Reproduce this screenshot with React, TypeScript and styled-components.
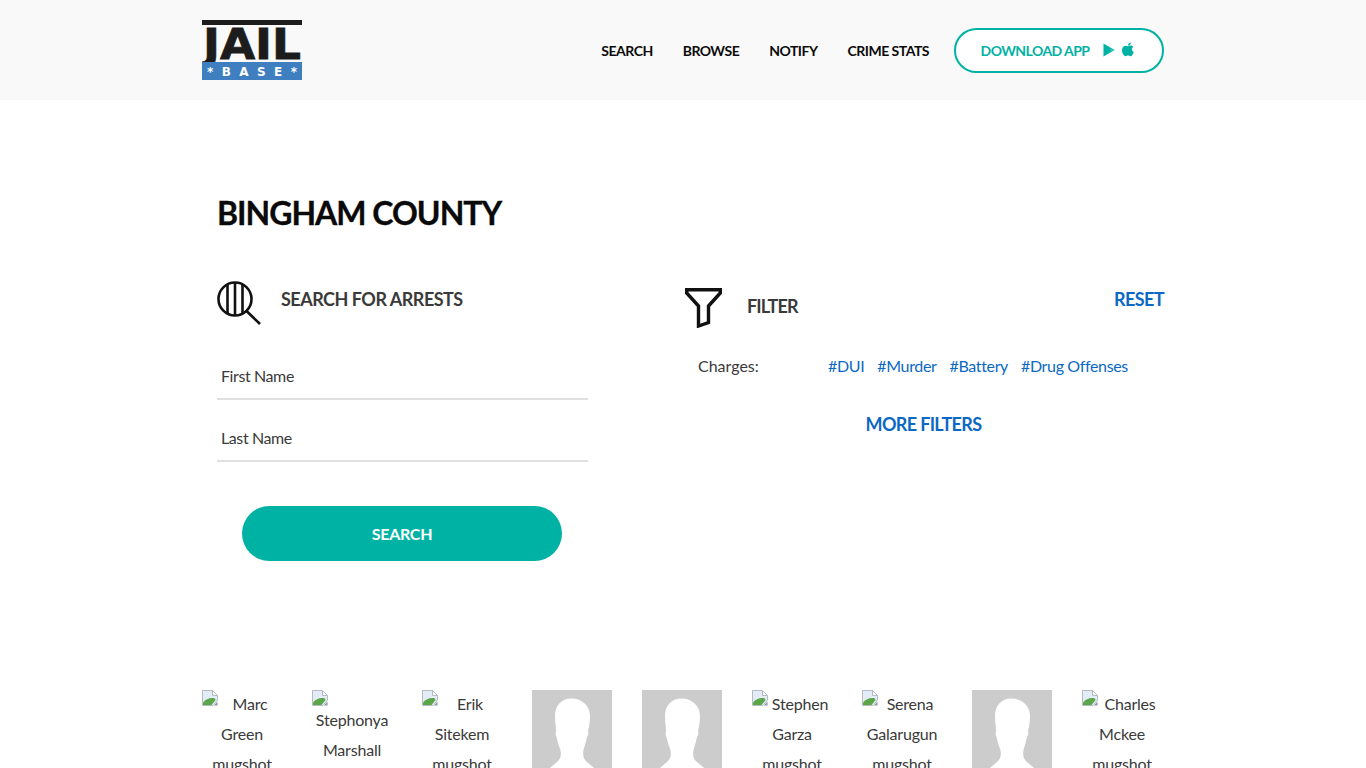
import React, { FC } from 'react';
import styled, { createGlobalStyle } from 'styled-components';

const GlobalStyle = createGlobalStyle`
  html, body {
    margin: 0;
    padding: 0;
    background: #fff;
    font-family: 'Lato', 'Liberation Sans', sans-serif;
    color: #3a3a3a;
  }
  * { box-sizing: border-box; }
`;

const teal = '#00b2a3';
const blue = '#0b68c4';

type TMugshot = { name?: string };

const mugshots: TMugshot[] = [
  { name: 'Marc Green' },
  { name: 'Stephonya Marshall' },
  { name: 'Erik Sitekem' },
  {},
  {},
  { name: 'Stephen Garza' },
  { name: 'Serena Galarugun' },
  {},
  { name: 'Charles Mckee' }
];

const tags = ['#DUI', '#Murder', '#Battery', '#Drug Offenses'];

const BrokenImage: FC = () => (
  <BrokenIcon viewBox='0 0 16 16'>
    <path d='M0.5 0.5H10.5L15.5 5.5V10L11 15.5H0.5Z' fill='#e4ecf7' stroke='#b4bbc3' />
    <path d='M10.5 0.5V5.5H15.5Z' fill='#fff' stroke='#b4bbc3' />
    <path d='M1 15V12.5C4 9 7 7.5 12 8C13 8.5 13.5 9.5 13.5 10L9.5 15Z' fill='#5aa648' />
    <path d='M12 15.5L15.5 11.5V15.5Z' fill='#8a96a1' />
  </BrokenIcon>
);

const Silhouette: FC = () => (
  <SilhouetteSvg viewBox='0 0 80 100'>
    <rect width='80' height='100' fill='#cccccc' />
    <path
      d='M39.5 8.5C29 8.5 23 16 23 26C23 32 24 37 24 41C23.5 43 23.5 45 24.5 47C25.5 52 27 56 28.5 60C29.5 65 28.5 69 25 72C22 75 18 77 15 81L11 100H69L65 81C62 77 58 75 55 72C51.5 69 50.5 65 51.5 60C52.5 56 54 52 55 47C56.5 45 56.5 43 56 41C57 37 58 32 58 26C58 16 50 8.5 39.5 8.5Z'
      fill='#ffffff'
    />
  </SilhouetteSvg>
);

const App: FC = () => (<>
  <GlobalStyle />
  <Header>
    <HeaderInner>
      <Logo viewBox='0 0 100 60' aria-label='JailBase'>
        <rect width='100' height='5' fill='#1c1c1c' />
        <LogoJail x='50' y='39' textLength='98' lengthAdjust='spacingAndGlyphs'>JAIL</LogoJail>
        <rect y='42' width='100' height='18' fill='#3f7fbf' />
        <LogoBase x='50' y='55.5' textLength='90' lengthAdjust='spacing'>*BASE*</LogoBase>
      </Logo>
      <Nav>
        <NavLink>Search</NavLink>
        <NavLink>Browse</NavLink>
        <NavLink>Notify</NavLink>
        <NavLink>Crime Stats</NavLink>
        <DownloadButton>
          Download App
          <DownloadIcons>
            <svg width='12' height='14' viewBox='0 0 12 14'>
              <path d='M0.5 0.5L11.5 7L0.5 13.5Z' fill={teal} />
              <path d='M6.5 7L8.6 5.3L11.5 7L8.6 8.7Z' fill='#2fc4b7' />
            </svg>
            <svg width='14' height='16' viewBox='0 0 14 16'>
              <path d='M7 4.2C8 3.4 9.3 3.2 10.4 3.6C11.2 3.9 11.8 4.4 12.2 5C10.2 6.2 10.6 9 12.8 9.9C12.2 11.8 10.8 14.2 9.4 14.2C8.4 14.2 8 13.6 7 13.6C6 13.6 5.5 14.2 4.6 14.2C3 14.2 1 11 1 8.2C1 5.4 2.8 3.7 4.6 3.7C5.6 3.7 6.3 4.2 7 4.2Z' fill={teal} />
              <path d='M7 3.6C7 2 8.2 0.6 9.8 0.4C9.9 2 8.6 3.6 7 3.6Z' fill={teal} />
            </svg>
          </DownloadIcons>
        </DownloadButton>
      </Nav>
    </HeaderInner>
  </Header>
  <Main>
    <Title>Bingham County</Title>
    <Columns>
      <SearchColumn>
        <SearchHeading>
          <svg width='44' height='44' viewBox='0 0 44 44' fill='none' stroke='#111' strokeWidth='2.6'>
            <circle cx='18' cy='18' r='16.5' />
            <path d='M10.5 3.5V32.5M18 1.5V34.5M25.5 3.5V32.5' />
            <path d='M29.5 30L43 43' />
          </svg>
          <SectionLabel>Search for arrests</SectionLabel>
        </SearchHeading>
        <Field>First Name</Field>
        <Field>Last Name</Field>
        <SearchButton>Search</SearchButton>
      </SearchColumn>
      <FilterColumn>
        <FilterHeading>
          <svg width='37' height='40' viewBox='0 0 37 40' fill='none' stroke='#111' strokeWidth='3.4'>
            <path d='M1.7 1.7H35.3V5L23.5 18V34.5L13.5 38V18L1.7 5Z' />
          </svg>
          <FilterLabel>Filter</FilterLabel>
          <ResetLink>Reset</ResetLink>
        </FilterHeading>
        <ChargeRow>
          <ChargeLabel>Charges:</ChargeLabel>
          {tags.map((tag) => <Tag key={tag}>{tag}</Tag>)}
        </ChargeRow>
        <MoreFilters>More filters</MoreFilters>
      </FilterColumn>
    </Columns>
    <MugshotRow>
      {mugshots.map((mugshot, index) => mugshot.name
        ? <MugshotCaption key={index}><BrokenImage />{mugshot.name} mugshot</MugshotCaption>
        : <MugshotPhoto key={index}><Silhouette /></MugshotPhoto>
      )}
    </MugshotRow>
  </Main>
</>);

export default App;

const Header = styled.header`
  height: 100px;
  background: #f9f9f9;
`;

const HeaderInner = styled.div`
  width: 962px;
  height: 100%;
  margin: 0 auto;
  display: flex;
  align-items: center;
  justify-content: space-between;
`;

const Logo = styled.svg`
  width: 100px;
  height: 60px;
  display: block;
`;

const LogoJail = styled.text`
  font-family: 'DejaVu Sans', sans-serif;
  font-weight: 700;
  font-size: 43px;
  text-anchor: middle;
  fill: #1c1c1c;
  stroke: #1c1c1c;
  stroke-width: 0.8px;
`;

const LogoBase = styled.text`
  font-family: 'DejaVu Sans', sans-serif;
  font-weight: 700;
  font-size: 12px;
  text-anchor: middle;
  fill: #ffffff;
`;

const Nav = styled.nav`
  display: flex;
  align-items: center;
`;

const NavLink = styled.a`
  margin-right: 30px;
  font-size: 14px;
  font-weight: 700;
  letter-spacing: -0.5px;
  text-transform: uppercase;
  color: #0a0a0a;
  &:nth-child(4) {
    margin-right: 25px;
  }
`;

const DownloadButton = styled.a`
  width: 210px;
  height: 45px;
  display: flex;
  align-items: center;
  justify-content: center;
  gap: 14px;
  padding-right: 2px;
  border: 2px solid ${teal};
  border-radius: 23px;
  background: #fff;
  font-size: 14px;
  font-weight: 700;
  letter-spacing: -0.55px;
  text-transform: uppercase;
  color: ${teal};
`;

const DownloadIcons = styled.span`
  display: flex;
  align-items: center;
  gap: 6px;
`;

const Main = styled.main`
  width: 962px;
  margin: 0 auto;
`;

const Title = styled.h1`
  margin: 0;
  padding: 93px 0 0 15px;
  font-size: 32px;
  line-height: 40px;
  font-weight: 700;
  letter-spacing: -1px;
  -webkit-text-stroke: 0.3px #0a0a0a;
  text-transform: uppercase;
  color: #0a0a0a;
`;

const Columns = styled.div`
  display: flex;
  padding: 48px 0 0 15px;
  height: 457px;
`;

const SearchColumn = styled.section`
  width: 371px;
  display: flex;
  flex-direction: column;
`;

const SearchHeading = styled.div`
  display: flex;
  align-items: flex-start;
  gap: 20px;
  height: 60px;
`;

const SectionLabel = styled.h2`
  margin: 0;
  padding-top: 8px;
  font-size: 18px;
  line-height: 20px;
  font-weight: 700;
  letter-spacing: -0.5px;
  text-transform: uppercase;
  color: #3a3a3a;
`;

const Field = styled.div`
  height: 59px;
  margin-bottom: 3px;
  padding: 25px 0 0 4px;
  border-bottom: 2px solid #e0e0e0;
  font-size: 16px;
  line-height: 20px;
  letter-spacing: -0.4px;
  color: #3a3a3a;
`;

const SearchButton = styled.button`
  width: 320px;
  height: 55px;
  margin: 41px 0 0 25px;
  border: 0;
  border-radius: 28px;
  background: ${teal};
  color: #fff;
  font-family: inherit;
  font-size: 16px;
  font-weight: 700;
  letter-spacing: -0.3px;
  text-transform: uppercase;
`;

const FilterColumn = styled.section`
  width: 479px;
  margin-left: 97px;
  padding-top: 7px;
`;

const FilterHeading = styled.div`
  display: flex;
  align-items: flex-start;
  height: 40px;
`;

const FilterLabel = styled.h2`
  margin: 0;
  padding: 8px 0 0 25px;
  flex-grow: 1;
  font-size: 18px;
  line-height: 20px;
  font-weight: 700;
  letter-spacing: -0.9px;
  text-transform: uppercase;
  color: #3a3a3a;
`;

const ResetLink = styled.a`
  margin-top: -7px;
  padding-top: 8px;
  font-size: 18px;
  line-height: 20px;
  font-weight: 700;
  letter-spacing: -0.6px;
  text-transform: uppercase;
  color: ${blue};
`;

const ChargeRow = styled.div`
  display: flex;
  align-items: center;
  margin-top: 28px;
  padding-left: 13px;
  font-size: 16px;
  line-height: 20px;
  letter-spacing: -0.35px;
`;

const ChargeLabel = styled.span`
  width: 130px;
  letter-spacing: 0;
  color: #3a3a3a;
`;

const Tag = styled.a`
  margin-right: 13px;
  color: ${blue};
`;

const MoreFilters = styled.a`
  display: block;
  margin-top: 38px;
  padding-right: 2px;
  text-align: center;
  font-size: 18px;
  line-height: 20px;
  font-weight: 700;
  letter-spacing: -0.65px;
  text-transform: uppercase;
  color: ${blue};
`;

const MugshotRow = styled.div`
  display: flex;
  align-items: flex-start;
  gap: 30px;
`;

const MugshotPhoto = styled.div`
  width: 80px;
  flex-shrink: 0;
`;

const MugshotCaption = styled.div`
  width: 80px;
  flex-shrink: 0;
  margin-top: -1px;
  text-align: center;
  font-size: 16px;
  line-height: 30px;
  letter-spacing: -0.2px;
  color: #3a3a3a;
`;

const BrokenIcon = styled.svg`
  float: left;
  width: 16px;
  height: 16px;
  margin: 1px 0 -1px;
`;

const SilhouetteSvg = styled.svg`
  display: block;
  width: 80px;
  height: 100px;
`;
